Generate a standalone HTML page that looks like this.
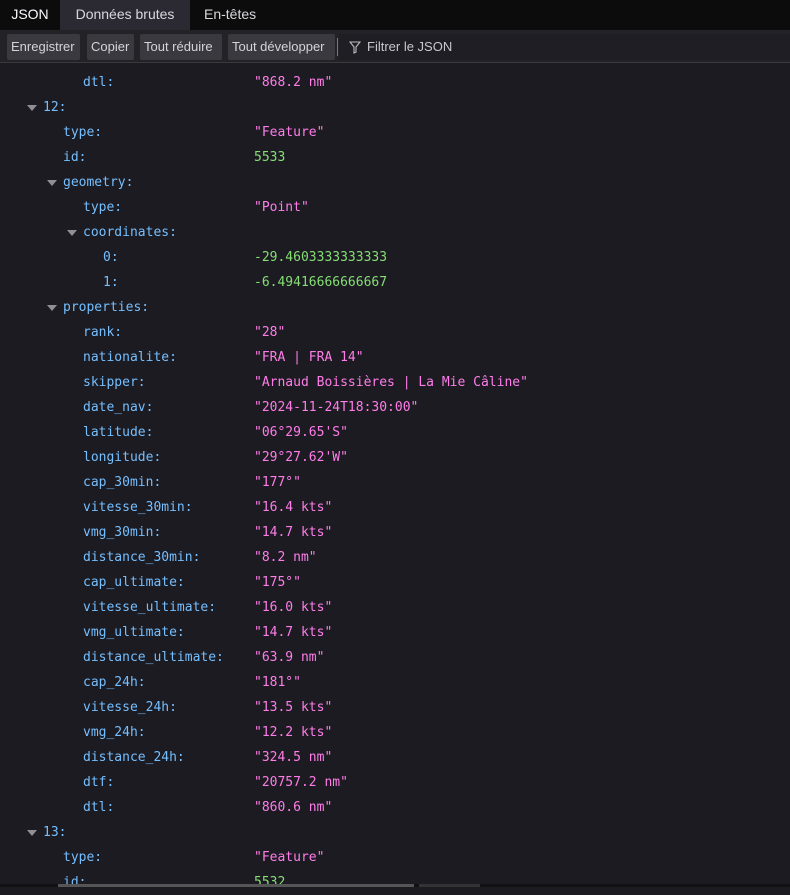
<!DOCTYPE html><html><head><style>
body{margin:0;width:790px;height:887px;overflow:hidden;background:#1c1b22;font-family:"Liberation Sans",sans-serif;}
.tabs{height:30px;background:#0c0c0d;position:relative}
.tab{position:absolute;top:0;height:30px;line-height:28px;font-size:14px;color:#d8d8dc}
.toolbar{position:absolute;top:30px;left:0;width:790px;height:32px;background:#232327;border-bottom:1px solid #3a3a3e}
.btn{position:absolute;top:4px;height:26px;line-height:26px;background:#3a393f;border-radius:2px;color:#d4d4d8;font-size:13px;padding:0 4px;box-sizing:border-box}
.rows{position:absolute;top:70px;left:0;width:790px;font-family:"DejaVu Sans Mono","Liberation Mono",monospace;font-size:13px}
.r{height:25px;line-height:25px;position:relative}
.k{position:absolute;color:#75bfff}
.v{position:absolute;left:254px}
.s{color:#ff7de9}.n{color:#86de74}
.a{position:absolute;top:10px;width:0;height:0;border-left:5px solid transparent;border-right:5px solid transparent;border-top:6px solid #8f8f95}
</style></head><body>
<div class="tabs">
<div class="tab" style="left:0;width:60px;background:#0c0c0d;text-align:center;color:#fbfbfe">JSON</div>
<div class="tab" style="left:60px;width:130px;background:#2b2a33;text-align:center">Données brutes</div>
<div class="tab" style="left:204px">En-têtes</div>
</div>
<div class="toolbar">
<div class="btn" style="left:7px;width:73px">Enregistrer</div>
<div class="btn" style="left:87px;width:47px">Copier</div>
<div class="btn" style="left:140px;width:82px">Tout réduire</div>
<div class="btn" style="left:228px;width:107px">Tout développer</div>
<div style="position:absolute;left:337px;top:8px;width:1px;height:18px;background:#777"></div>
<div style="position:absolute;left:339px;top:4px;width:451px;height:26px;background:#1f1e25"></div>
<svg style="position:absolute;left:349px;top:11px" width="12" height="13" viewBox="0 0 12 13"><path d="M1 1h10L7 6v5L5 12V6z" fill="none" stroke="#bbb" stroke-width="1.1"/></svg>
<div style="position:absolute;left:367px;top:4px;line-height:26px;font-size:13px;color:#c8c8cc">Filtrer le JSON</div>
</div>
<div class="rows">
<div class="r"><span class="k" style="left:83px">dtl:</span><span class="v s">"868.2 nm"</span></div>
<div class="r"><span class="a" style="left:27px"></span><span class="k" style="left:43px">12:</span></div>
<div class="r"><span class="k" style="left:63px">type:</span><span class="v s">"Feature"</span></div>
<div class="r"><span class="k" style="left:63px">id:</span><span class="v n">5533</span></div>
<div class="r"><span class="a" style="left:47px"></span><span class="k" style="left:63px">geometry:</span></div>
<div class="r"><span class="k" style="left:83px">type:</span><span class="v s">"Point"</span></div>
<div class="r"><span class="a" style="left:67px"></span><span class="k" style="left:83px">coordinates:</span></div>
<div class="r"><span class="k" style="left:103px">0:</span><span class="v n">-29.4603333333333</span></div>
<div class="r"><span class="k" style="left:103px">1:</span><span class="v n">-6.49416666666667</span></div>
<div class="r"><span class="a" style="left:47px"></span><span class="k" style="left:63px">properties:</span></div>
<div class="r"><span class="k" style="left:83px">rank:</span><span class="v s">"28"</span></div>
<div class="r"><span class="k" style="left:83px">nationalite:</span><span class="v s">"FRA | FRA 14"</span></div>
<div class="r"><span class="k" style="left:83px">skipper:</span><span class="v s">"Arnaud Boissières | La Mie Câline"</span></div>
<div class="r"><span class="k" style="left:83px">date_nav:</span><span class="v s">"2024-11-24T18:30:00"</span></div>
<div class="r"><span class="k" style="left:83px">latitude:</span><span class="v s">"06°29.65'S"</span></div>
<div class="r"><span class="k" style="left:83px">longitude:</span><span class="v s">"29°27.62'W"</span></div>
<div class="r"><span class="k" style="left:83px">cap_30min:</span><span class="v s">"177°"</span></div>
<div class="r"><span class="k" style="left:83px">vitesse_30min:</span><span class="v s">"16.4 kts"</span></div>
<div class="r"><span class="k" style="left:83px">vmg_30min:</span><span class="v s">"14.7 kts"</span></div>
<div class="r"><span class="k" style="left:83px">distance_30min:</span><span class="v s">"8.2 nm"</span></div>
<div class="r"><span class="k" style="left:83px">cap_ultimate:</span><span class="v s">"175°"</span></div>
<div class="r"><span class="k" style="left:83px">vitesse_ultimate:</span><span class="v s">"16.0 kts"</span></div>
<div class="r"><span class="k" style="left:83px">vmg_ultimate:</span><span class="v s">"14.7 kts"</span></div>
<div class="r"><span class="k" style="left:83px">distance_ultimate:</span><span class="v s">"63.9 nm"</span></div>
<div class="r"><span class="k" style="left:83px">cap_24h:</span><span class="v s">"181°"</span></div>
<div class="r"><span class="k" style="left:83px">vitesse_24h:</span><span class="v s">"13.5 kts"</span></div>
<div class="r"><span class="k" style="left:83px">vmg_24h:</span><span class="v s">"12.2 kts"</span></div>
<div class="r"><span class="k" style="left:83px">distance_24h:</span><span class="v s">"324.5 nm"</span></div>
<div class="r"><span class="k" style="left:83px">dtf:</span><span class="v s">"20757.2 nm"</span></div>
<div class="r"><span class="k" style="left:83px">dtl:</span><span class="v s">"860.6 nm"</span></div>
<div class="r"><span class="a" style="left:27px"></span><span class="k" style="left:43px">13:</span></div>
<div class="r"><span class="k" style="left:63px">type:</span><span class="v s">"Feature"</span></div>
<div class="r"><span class="k" style="left:63px">id:</span><span class="v n">5532</span></div>
</div>
<div style="position:absolute;left:0;top:884px;width:790px;height:3px;background:#111"></div>
<div style="position:absolute;left:58px;top:884px;width:356px;height:3px;background:#555"></div>
<div style="position:absolute;left:419px;top:884px;width:61px;height:3px;background:#333"></div>
</body></html>
